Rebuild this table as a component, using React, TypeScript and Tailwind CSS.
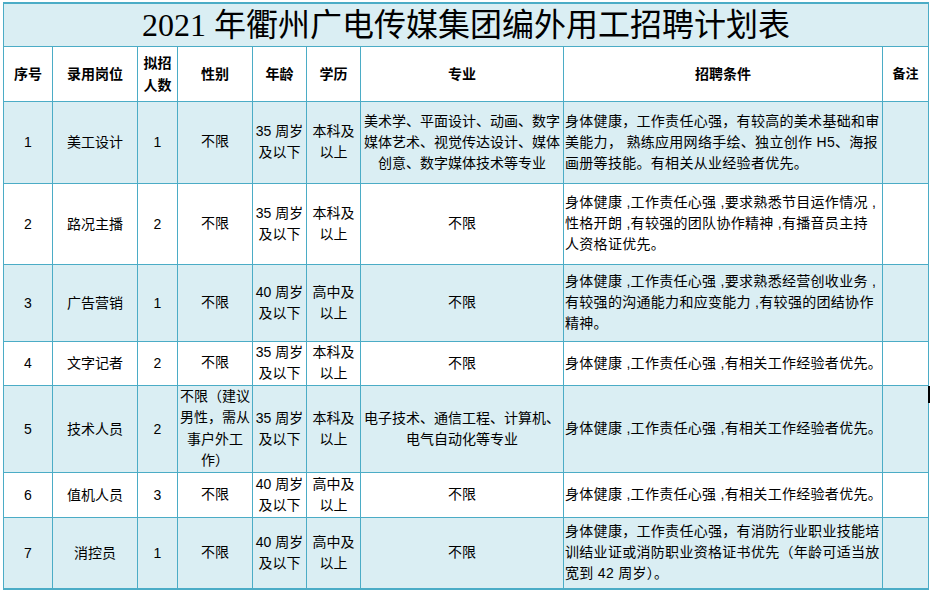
import React from 'react';

type Row = {
  no: string;
  pos: string;
  num: string;
  sex: string[];
  age: string[];
  edu: string[];
  major: string[];
  cond: string[];
  h: string;
  blue: boolean;
};

const rows: Row[] = [
  {
    no: '1', pos: '美工设计', num: '1', sex: ['不限'], age: ['35 周岁', '及以下'], edu: ['本科及', '以上'],
    major: ['美术学、平面设计、动画、数字', '媒体艺术、视觉传达设计、媒体', '创意、数字媒体技术等专业'],
    cond: ['身体健康，工作责任心强，有较高的美术基础和审', '美能力， 熟练应用网络手绘、独立创作 H5、海报', '画册等技能。有相关从业经验者优先。'],
    h: 'h-[82px]', blue: true,
  },
  {
    no: '2', pos: '路况主播', num: '2', sex: ['不限'], age: ['35 周岁', '及以下'], edu: ['本科及', '以上'],
    major: ['不限'],
    cond: ['身体健康 ,工作责任心强 ,要求熟悉节目运作情况 ,', '性格开朗 ,有较强的团队协作精神 ,有播音员主持', '人资格证优先。'],
    h: 'h-[81px]', blue: false,
  },
  {
    no: '3', pos: '广告营销', num: '1', sex: ['不限'], age: ['40 周岁', '及以下'], edu: ['高中及', '以上'],
    major: ['不限'],
    cond: ['身体健康 ,工作责任心强 ,要求熟悉经营创收业务 ,', '有较强的沟通能力和应变能力 ,有较强的团结协作', '精神。'],
    h: 'h-[77px]', blue: true,
  },
  {
    no: '4', pos: '文字记者', num: '2', sex: ['不限'], age: ['35 周岁', '及以下'], edu: ['本科及', '以上'],
    major: ['不限'],
    cond: ['身体健康 ,工作责任心强 ,有相关工作经验者优先。'],
    h: 'h-[44px]', blue: false,
  },
  {
    no: '5', pos: '技术人员', num: '2', sex: ['不限（建议', '男性，需从', '事户外工', '作）'], age: ['35 周岁', '及以下'], edu: ['本科及', '以上'],
    major: ['电子技术、通信工程、计算机、', '电气自动化等专业'],
    cond: ['身体健康 ,工作责任心强 ,有相关工作经验者优先。'],
    h: 'h-[85px]', blue: true,
  },
  {
    no: '6', pos: '值机人员', num: '3', sex: ['不限'], age: ['40 周岁', '及以下'], edu: ['高中及', '以上'],
    major: ['不限'],
    cond: ['身体健康 ,工作责任心强 ,有相关工作经验者优先。'],
    h: 'h-[45px]', blue: false,
  },
  {
    no: '7', pos: '消控员', num: '1', sex: ['不限'], age: ['40 周岁', '及以下'], edu: ['高中及', '以上'],
    major: ['不限'],
    cond: ['身体健康，工作责任心强，有消防行业职业技能培', '训结业证或消防职业资格证书优先（年龄可适当放', '宽到 42 周岁）。'],
    h: 'h-[72px]', blue: true,
  },
];

const cell = 'border border-[#4bacc6] p-0 align-middle';

const Lines = ({ lines, className = '' }: { lines: string[]; className?: string }) => (
  <div className={className}>
    {lines.map((l, i) => (
      <div key={i} className="whitespace-nowrap">{l}</div>
    ))}
  </div>
);

export default function App() {
  return (
    <div className="relative w-[930px] h-[592px] overflow-hidden bg-white pt-[2px] pl-[3px] text-black font-['Liberation_Sans','Noto_Sans_CJK_SC',sans-serif]">
      <table className="table-fixed border-collapse w-[925px] text-[14px] leading-[20px]">
        <colgroup>
          <col className="w-[49px]" />
          <col className="w-[85px]" />
          <col className="w-[40px]" />
          <col className="w-[75px]" />
          <col className="w-[54px]" />
          <col className="w-[54px]" />
          <col className="w-[203px]" />
          <col className="w-[319px]" />
          <col className="w-[46px]" />
        </colgroup>
        <tbody>
          <tr className="h-[43px] bg-[#daeef3]">
            <td colSpan={9} className={`${cell} border-t-2 text-center text-[32px] leading-[38px] font-['Liberation_Serif','Noto_Sans_CJK_SC',serif]`}>
              2021 年衢州广电传媒集团编外用工招聘计划表
            </td>
          </tr>
          <tr className="h-[55px] bg-white font-bold">
            <td className={`${cell} text-center`}>序号</td>
            <td className={`${cell} text-center`}>录用岗位</td>
            <td className={`${cell} text-center leading-[22px]`}>
              <div>拟招</div>
              <div>人数</div>
            </td>
            <td className={`${cell} text-center`}>性别</td>
            <td className={`${cell} text-center`}>年龄</td>
            <td className={`${cell} text-center`}>学历</td>
            <td className={`${cell} text-center`}>专业</td>
            <td className={`${cell} text-center`}>招聘条件</td>
            <td className={`${cell} text-center text-[13px]`}>备注</td>
          </tr>
          {rows.map((r, i) => {
            const last = i === rows.length - 1 ? 'border-b-2' : '';
            return (
              <tr key={r.no} className={`${r.h} ${r.blue ? 'bg-[#daeef3]' : 'bg-white'}`}>
                <td className={`${cell} text-center ${last}`}>{r.no}</td>
                <td className={`${cell} text-center ${last}`}>{r.pos}</td>
                <td className={`${cell} text-center ${last}`}>{r.num}</td>
                <td className={`${cell} text-center ${last}`}>
                  <Lines lines={r.sex} className="leading-[21.5px]" />
                </td>
                <td className={`${cell} text-center ${last}`}>
                  <Lines lines={r.age} className="leading-[21px]" />
                </td>
                <td className={`${cell} text-center ${last}`}>
                  <Lines lines={r.edu} className="leading-[21px]" />
                </td>
                <td className={`${cell} text-center ${last}`}>
                  <Lines lines={r.major} className="leading-[21px]" />
                </td>
                <td className={`${cell} text-left pl-[1px] ${last}`}>
                  <Lines lines={r.cond} className="leading-[21px] tracking-[0.3px]" />
                </td>
                <td className={`${cell} ${last}`}></td>
              </tr>
            );
          })}
        </tbody>
      </table>
      <div className="absolute left-[928px] top-[386px] w-[2px] h-[17px] bg-black" />
    </div>
  );
}
